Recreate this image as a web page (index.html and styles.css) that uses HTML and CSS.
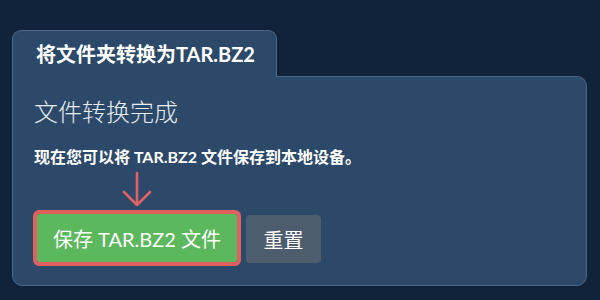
FILE: index.html
```html
<!DOCTYPE html>
<html lang="zh-CN">
<head>
  <meta charset="UTF-8" />
  <title>将文件夹转换为TAR.BZ2</title>
  <link rel="stylesheet" href="styles.css">
</head>
<body>

<div class="converter">
  <div class="tab">将文件夹转换为TAR.BZ2</div>
  <div class="panel">
    <h2>文件转换完成</h2>
    <p class="note">现在您可以将 TAR.BZ2 文件保存到本地设备。</p>
    <div class="actions">
      <div class="save-wrap">
        <svg class="arrow" width="32" height="36" viewBox="0 0 32 36">
          <path d="M16 1 V33 M3 20 L16 33 L29 20" fill="none" stroke="#e06262" stroke-width="2.6" stroke-linecap="round" stroke-linejoin="round"/>
        </svg>
        <button class="btn btn-save">保存 TAR.BZ2 文件</button>
      </div>
      <button class="btn btn-reset">重置</button>
    </div>
  </div>
</div>

</body>
</html>
```

FILE: styles.css
```css
body {
  margin: 0;
  background: #11233a;
  font-family: "Lato", "Noto Sans CJK SC", sans-serif;
  color: #fff;
}
.converter {
  width: 575px;
  margin: 30px 0 0 12px;
}
.tab {
  position: relative;
  z-index: 1;
  display: inline-block;
  margin-bottom: -1px;
  padding: 10px 21px 10px 23px;
  height: 26px;
  line-height: 26px;
  background: #2c4969;
  border: 1px solid #4a6586;
  border-bottom: none;
  border-radius: 9px 9px 0 0;
  font-size: 20px;
  font-weight: 700;
}
.panel {
  background: #2c4969;
  border: 1px solid #4a6586;
  border-radius: 0 10px 10px 10px;
  padding: 20px 21px 22px;
}
h2 {
  margin: 0;
  font-size: 24px;
  font-weight: 300;
  line-height: 30px;
  color: #e8edf2;
}
.note {
  margin: 19px 0 0;
  font-size: 16px;
  font-weight: 700;
  line-height: 22px;
}
.actions {
  display: flex;
  align-items: flex-start;
  gap: 9px;
  margin-top: 46px;
  padding-left: 3px;
}
.save-wrap {
  position: relative;
}
.arrow {
  position: absolute;
  left: 50%;
  bottom: 100%;
  margin-left: -16px;
  margin-bottom: 6px;
}
.btn {
  border: none;
  border-radius: 4px;
  color: #fff;
  font-family: inherit;
  font-size: 20px;
  height: 48px;
  cursor: pointer;
}
.btn-save {
  width: 200px;
  background: #5cb85c;
  outline: 4px solid #e06060;
  border-radius: 2px;
}
.btn-reset {
  margin-top: 1px;
  width: 75px;
  background: #4e5d6d;
}
```
